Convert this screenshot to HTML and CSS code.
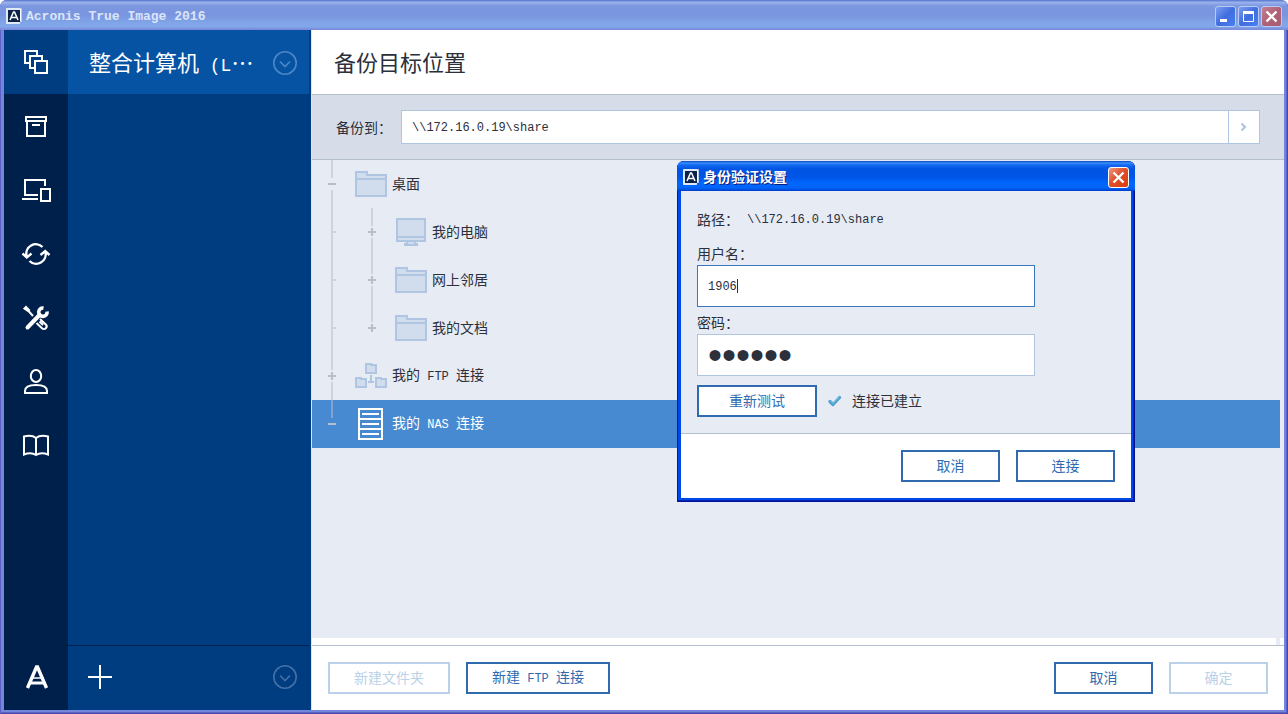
FILE: index.html
```html
<!DOCTYPE html>
<html lang="zh-CN">
<head>
<meta charset="utf-8">
<title>Acronis True Image 2016</title>
<link rel="stylesheet" href="styles.css">
</head>
<body>
<svg class="defs" width="0" height="0" aria-hidden="true">
  <symbol id="app" viewBox="0 0 16 16">
    <path d="M2.500.500h13v13h-13z" fill="#fff" stroke="#b9cbe8"/>
    <path d="M.500.500h13v15H.500z" fill="#dfe8f6" stroke="#e3eaf6"/>
    <path d="M2 2h12v12H2z" fill="#0b2348"/>
    <path d="M4 12 7.500 4h1L12 12M5 9.500h6" fill="none" stroke="#fff" stroke-width="1.500"/>
  </symbol>
  <symbol id="folder" viewBox="0 0 32 32">
    <path d="M1 28V4h11v3h19v21z" fill="#d1dded" stroke="#b0c5e1" stroke-width="2"/>
    <path d="M1 11h30" stroke="#b0c5e1" stroke-width="2"/>
  </symbol>
  <symbol id="chev" viewBox="0 0 24 24">
    <circle cx="12" cy="12" r="11.200" fill="none" stroke="currentColor" stroke-width="1.600"/>
    <path d="m7 10.500 5 5 5-5" fill="none" stroke="currentColor" stroke-width="1.600"/>
  </symbol>
  <symbol id="g-minus" viewBox="0 0 40 48">
    <path d="M20 0v18M20 30v18" stroke="#cdd2dc" stroke-width="2"/><path d="M16 24h8" stroke="#b3bfca" stroke-width="2"/>
  </symbol>
  <symbol id="g-plus" viewBox="0 0 40 48">
    <path d="M20 0v18M20 30v18" stroke="#cdd2dc" stroke-width="2"/><path d="M16 24h8M20 20v8" stroke="#b3bfca" stroke-width="2"/>
  </symbol>
  <symbol id="g-plus-end" viewBox="0 0 40 48">
    <path d="M20 0v18" stroke="#cdd2dc" stroke-width="2"/><path d="M16 24h8M20 20v8" stroke="#b3bfca" stroke-width="2"/>
  </symbol>
  <symbol id="g-end" viewBox="0 0 40 48">
    <path d="M20 0v18" stroke="#82a5cf" stroke-width="2"/><path d="M16 24h8" stroke="#b3bfca" stroke-width="2"/>
  </symbol>
  <symbol id="g-line" viewBox="0 0 40 48">
    <path d="M20 0v48M21 24h3" stroke="#cdd2dc" stroke-width="2"/>
  </symbol>
</svg>

<div class="window">
  <header class="titlebar">
    <svg class="app-icon"><use href="#app"/></svg>
    <span class="title-latin">Acronis True Image 2016</span>
    <div class="controls">
      <button class="ctl" aria-label="最小化"><svg viewBox="0 0 19 19"><path d="M4 13.500h7" stroke="#fff" stroke-width="3"/></svg></button>
      <button class="ctl" aria-label="最大化"><svg viewBox="0 0 19 19"><path d="M4.500 4v10.500h10V4" fill="none" stroke="#fff"/><path d="M4 5.500h11" stroke="#fff" stroke-width="3"/></svg></button>
      <button class="ctl ctl-close" aria-label="关闭"><svg viewBox="0 0 19 19"><path d="m4.500 4.500 10 10M14.500 4.500l-10 10" stroke="#fff" stroke-width="2.400"/></svg></button>
    </div>
  </header>

  <div class="app">
    <nav class="rail">
      <button class="rail-item active" aria-label="备份"><svg viewBox="0 0 32 32"><path d="M9 17H5V5h12v4M14 22h-4V10h12v4M15 15h12v12H15z"/></svg></button>
      <button class="rail-item" aria-label="存档"><svg viewBox="0 0 32 32"><path d="M6 7h20v4H6zM7 11v15h18V11M12 15h8"/></svg></button>
      <button class="rail-item" aria-label="设备"><svg viewBox="0 0 32 32"><path d="M18 21H5V6h20v6M2 25h16M21 15h9v12h-9z"/></svg></button>
      <button class="rail-item" aria-label="同步"><svg viewBox="0 0 32 32"><path d="M22.500 9A9.500 9.500 0 0 0 6.600 18M9.500 23A9.500 9.500 0 0 0 25.400 14M2.500 15.500l4.300 4 4.700-4M20.500 17l4.700-4 4.300 4" stroke-width="2.400"/></svg></button>
      <button class="rail-item" aria-label="工具"><svg viewBox="0 0 32 32"><path d="M4.500 6.500 6 5l3 3-1 1zM8 8.500l5 5.500"/><path d="M7.500 25.500 19.500 13" stroke-width="4" stroke-linecap="round"/><path d="M23.500 6a4.200 4.200 0 1 0 3.600 3.600" stroke-width="3.600"/><path d="m16.500 21 5.500 5.300a2.500 2.500 0 0 0 3.800-3.800L20 17M19.500 19.500l3.500 3.500"/></svg></button>
      <button class="rail-item" aria-label="帐户"><svg viewBox="0 0 32 32"><ellipse cx="16" cy="10" rx="5.200" ry="6"/><path d="M5 27v-2c0-4 4-6 11-6s11 2 11 6v2z"/></svg></button>
      <button class="rail-item" aria-label="帮助"><svg viewBox="0 0 32 32"><path d="M16 8C13 5.500 8 5.500 4 6.500v18c4-1.500 9-1.500 12 .500 3-2 8-2 12-.500v-18C24 5.500 19 5.500 16 8zv17"/></svg></button>
      <div class="rail-logo"><svg viewBox="0 0 32 32"><path d="M7.500 26 16.500 5h1L26.500 26" stroke-width="3.400"/><path d="M12 16h10" stroke-width="1.500"/><path d="M9 21h16" stroke-width="3"/></svg></div>
    </nav>

    <aside class="side">
      <button class="side-head">
        <span class="side-title">整合计算机<span class="latin-lg"> (L</span>…</span>
        <svg class="chev"><use href="#chev"/></svg>
      </button>
      <div class="side-list"></div>
      <div class="side-foot">
        <button class="bare" aria-label="添加备份"><svg viewBox="0 0 24 24"><path d="M12 0v24M0 12h24" stroke="#fff" stroke-width="2"/></svg></button>
        <button class="bare" aria-label="更多"><svg class="chev chev-dim"><use href="#chev"/></svg></button>
      </div>
    </aside>

    <main class="main">
      <h1 class="heading">备份目标位置</h1>
      <div class="address">
        <label for="dest">备份到：</label>
        <div class="address-box">
          <input id="dest" class="address-input" type="text" value="\\172.16.0.19\share">
          <button class="go" aria-label="转到"><svg viewBox="0 0 8 10"><path d="m1.500 1.500 3.500 3.500-3.500 3.500" fill="none" stroke="#b0c5e1" stroke-width="2.200"/></svg></button>
        </div>
      </div>

      <ul class="tree">
        <li class="row"><svg class="guide"><use href="#g-minus"/></svg><svg class="icon"><use href="#folder"/></svg><span class="name">桌面</span></li>
        <li class="row"><svg class="guide"><use href="#g-line"/></svg><svg class="guide"><use href="#g-plus"/></svg><svg class="icon" viewBox="0 0 32 32"><path d="M12 25h8v3h2v1H10v-1h2z" fill="#d1dded" stroke="#b0c5e1" stroke-width="2"/><path d="M2 3h28v22H2zM2 21h28" fill="#d1dded" stroke="#b0c5e1" stroke-width="2"/></svg><span class="name">我的电脑</span></li>
        <li class="row"><svg class="guide"><use href="#g-line"/></svg><svg class="guide"><use href="#g-plus"/></svg><svg class="icon"><use href="#folder"/></svg><span class="name">网上邻居</span></li>
        <li class="row"><svg class="guide"><use href="#g-line"/></svg><svg class="guide"><use href="#g-plus-end"/></svg><svg class="icon"><use href="#folder"/></svg><span class="name">我的文档</span></li>
        <li class="row"><svg class="guide"><use href="#g-plus"/></svg><svg class="icon" viewBox="0 0 32 32"><path d="M11 13V4h5v1h5v8zM1 27v-9h5v1h5v8zM21 27v-9h5v1h5v8z" fill="#d1dded" stroke="#b0c5e1" stroke-width="2"/><path d="M16 15v7M13 22h6" stroke="#b0c5e1" stroke-width="2"/></svg><span class="name">我的<span class="latin"> FTP </span>连接</span></li>
        <li class="row selected"><svg class="guide"><use href="#g-end"/></svg><svg class="icon" viewBox="0 0 32 32"><path d="M4 1h23v30H4zM4 11h23M4 21h23M7 6h17M7 16h17M7 26h17" fill="none" stroke="#fff" stroke-width="2"/></svg><span class="name">我的<span class="latin"> NAS </span>连接</span></li>
      </ul>
      <div class="scroll-track"></div>

      <footer class="actions">
        <button class="btn" disabled>新建文件夹</button>
        <button class="btn">新建<span class="latin"> FTP </span>连接</button>
        <span class="spacer"></span>
        <button class="btn btn-fixed">取消</button>
        <button class="btn btn-fixed" disabled>确定</button>
      </footer>
    </main>
  </div>
</div>

<section class="dialog" role="dialog" aria-labelledby="dlg-title">
  <header class="dialog-bar">
    <svg class="app-icon"><use href="#app"/></svg>
    <h2 id="dlg-title" class="dialog-title">身份验证设置</h2>
    <button class="ctl ctl-red" aria-label="关闭"><svg viewBox="0 0 19 19"><path d="m4.500 4.500 10 10M14.500 4.500l-10 10" stroke="#fff" stroke-width="2.400"/></svg></button>
  </header>
  <form class="dialog-body">
    <div class="path"><span>路径：</span><span class="latin">\\172.16.0.19\share</span></div>
    <label for="user">用户名：</label>
    <div class="field-wrap">
      <input id="user" class="field field-focus" type="text" value="1906">
      <span class="caret"></span>
    </div>
    <label for="pass" class="label-gap">密码：</label>
    <input id="pass" class="field field-pass" type="password" value="secret">
    <div class="test">
      <button type="button" class="btn btn-test">重新测试</button>
      <svg class="tick" viewBox="0 0 14 12"><path d="M2 6.500 5 9.500 11.500 2.500" fill="none" stroke="#4b9fd0" stroke-width="3.200" stroke-linecap="round" stroke-linejoin="round"/><path d="M2.500 6 5 8.500 11 2" fill="none" stroke="#83cdea" stroke-width="1" stroke-linecap="round"/></svg>
      <span class="name">连接已建立</span>
    </div>
  </form>
  <footer class="dialog-actions">
    <button class="btn btn-fixed">取消</button>
    <button class="btn btn-fixed">连接</button>
  </footer>
</section>
</body>
</html>
```
FILE: styles.css
```css
* { box-sizing: border-box; }
body {
  margin: 0;
  font: 14px/20px "Noto Sans CJK SC", sans-serif;
  color: #2b303b;
  background: #fff;
}
button, input { font: inherit; color: inherit; margin: 0; padding: 0; border-radius: 0; }
button { border: 0; background: none; }
svg { display: block; flex: none; }
.defs { position: absolute; }

.latin, .address-input { font-family: "Liberation Mono", monospace; font-size: 12px; white-space: pre; }
.latin-lg { font-family: "Liberation Mono", monospace; font-size: 18px; white-space: pre; }

.window {
  display: flex;
  flex-direction: column;
  min-height: 100vh;
  padding: 0 4px 4px;
  border-radius: 7px 7px 0 0;
  background: #7286dc;
  box-shadow: inset 1px 0 #5c5fc4, inset -1px -1px #4c48a8, inset -2px -2px #5b62c6;
}
.titlebar {
  display: flex;
  align-items: center;
  height: 30px;
  margin: 0 -4px;
  padding: 2px 6px 0;
  border-radius: 7px 7px 0 0;
  background: linear-gradient(#6480d4 0, #6480d4 1px, #9db6ee 2px, #94aeea 3px, #7c97e0 6px, #7a95df 15px, #80a5e8 23px, #82a6e9 27px, #7a8cdc 29px);
  color: #dbe5f9;
}
.app-icon { width: 16px; height: 16px; }
.title-latin {
  flex: 1;
  padding: 2px 0 0 4px;
  font: bold 13px/20px "Liberation Mono", monospace;
}
.controls { display: flex; gap: 2px; }
.ctl {
  width: 21px;
  height: 21px;
  border: 1px solid #b9caf3;
  border-radius: 3px;
  background: linear-gradient(135deg, #7f9eee, #3f6de0 50%, #4a80f0);
}
.ctl svg { width: 19px; height: 19px; }
.ctl-close { background: linear-gradient(135deg, #c08093, #b06177 50%, #a65f70); }
.ctl-red { border-color: #fff; background: linear-gradient(135deg, #f09a80, #e0502c 45%, #d83c08); }

.app { display: flex; flex: 1; background: #003c80; }
.rail { display: flex; flex-direction: column; width: 64px; background: #00204c; }
.rail-item, .rail-logo { display: flex; align-items: center; justify-content: center; height: 64px; }
.rail-item.active { background: #003c80; }
.rail-logo { margin-top: auto; }
.rail svg { width: 32px; height: 32px; fill: none; stroke: #fff; stroke-width: 2; }

.side { display: flex; flex-direction: column; width: 243px; padding-right: 2px; }
.side-head {
  display: flex;
  align-items: center;
  justify-content: space-between;
  height: 64px;
  padding: 2px 12px 0 21px;
  background: #0653a4;
  color: #fff;
}
.side-title { font-size: 22px; line-height: 32px; white-space: nowrap; }
.chev { width: 24px; height: 24px; color: #4c87c6; }
.chev-dim { color: #4470a6; }
.side-list { flex: 1; }
.side-foot {
  display: flex;
  align-items: center;
  justify-content: space-between;
  height: 65px;
  padding: 0 12px 2px 20px;
  border-top: 1px solid #00204c;
}
.bare svg { width: 24px; height: 24px; }

.main {
  display: flex;
  flex: 1;
  flex-direction: column;
  min-width: 0;
  border-left: 1px solid #dde5f0;
  background: #fff;
}
.heading {
  margin: 0;
  height: 65px;
  padding-left: 22px;
  border-bottom: 1px solid #b3bfca;
  font-size: 22px;
  font-weight: 400;
  line-height: 62px;
}
.address {
  display: flex;
  align-items: center;
  gap: 9px;
  height: 65px;
  padding: 0 24px;
  border-bottom: 1px solid #b3bfca;
  background: #d6dde8;
}
.address-box { display: flex; flex: 1; height: 34px; border: 1px solid #b0c5e1; background: #fff; }
.address-input { flex: 1; min-width: 0; padding: 2px 0 0 10px; border: 0; background: none; }
.go { display: flex; align-items: center; justify-content: center; width: 31px; border-left: 1px solid #b0c5e1; }
.go svg { width: 8px; height: 10px; }

.tree { flex: 1; margin: 0; padding: 0 4px 0 0; list-style: none; background: #e7ebf4; }
.row { display: flex; align-items: center; height: 48px; }
.row.selected { background: #488ad1; color: #fff; }
.guide { width: 40px; height: 48px; }
.icon { width: 32px; height: 32px; margin: 0 5px 0 3px; }
.name { padding-bottom: 2px; }
.scroll-track { height: 7px; margin-right: 4px; border-right: 4px solid #e7ebf4; background: #fff; }

.actions {
  display: flex;
  align-items: center;
  gap: 16px;
  height: 65px;
  padding: 0 16px;
  border-top: 1px solid #b3bfca;
}
.spacer { flex: 1; }
.btn {
  height: 32px;
  padding: 0 24px 2px;
  border: 2px solid #306bb0;
  background: #fff;
  color: #306bb0;
  line-height: 20px;
}
.btn:disabled { border-color: #bbd1e9; color: #bbd1e9; }
.btn-fixed { width: 99px; padding: 0 0 2px; }
.btn-test { width: 120px; padding: 0 0 2px; }

.dialog {
  position: absolute;
  left: 677px;
  top: 161px;
  width: 458px;
  padding: 0 4px 4px;
  border-radius: 7px 7px 0 0;
  background: #0048e8;
  box-shadow: inset 1px 0 #0018b4, inset -1px -1px #001290, inset -2px -2px #0024b8;
}
.dialog-bar {
  display: flex;
  align-items: center;
  height: 30px;
  margin: 0 -4px;
  padding: 2px 6px 0;
  border-radius: 7px 7px 0 0;
  background: linear-gradient(#0842c0 0, #3a90fc 2px, #1468f0 4px, #0054e3 8px, #0055e6 16px, #0066fc 22px, #0064fa 27px, #003cc8 30px);
}
.dialog-title {
  flex: 1;
  margin: 0;
  padding: 0 0 2px 4px;
  color: #fff;
  font-size: 14px;
  text-shadow: 1px 1px #0a1c7c;
}
.dialog-body {
  display: flex;
  flex-direction: column;
  align-items: flex-start;
  padding: 17px 16px 16px;
  border-bottom: 1px solid #b3bfca;
  background: #e7ebf4;
}
.dialog-body label { padding-bottom: 2px; }
.path { display: flex; align-items: center; gap: 8px; padding-bottom: 13px; }
.path .latin { padding-top: 2px; }
.field-wrap { position: relative; }
.field {
  display: block;
  width: 338px;
  height: 42px;
  padding: 2px 10px 0;
  border: 1px solid #b0c5e1;
  background: #fff;
  font-family: "Liberation Mono", monospace;
  font-size: 12px;
}
.field-focus { border-color: #3b77be; }
.field-pass { padding-top: 0; font-family: "Liberation Sans", sans-serif; font-size: 40px; line-height: 40px; }
.caret { position: absolute; left: 40px; top: 14px; width: 1px; height: 14px; background: #2b303b; }
.label-gap { margin-top: 5px; }
.test { display: flex; align-items: center; margin-top: 9px; }
.tick { width: 14px; height: 12px; margin: 0 10px 0 11px; }
.dialog-actions {
  display: flex;
  align-items: center;
  justify-content: flex-end;
  gap: 16px;
  height: 64px;
  padding: 0 16px;
  background: #fff;
}
```
